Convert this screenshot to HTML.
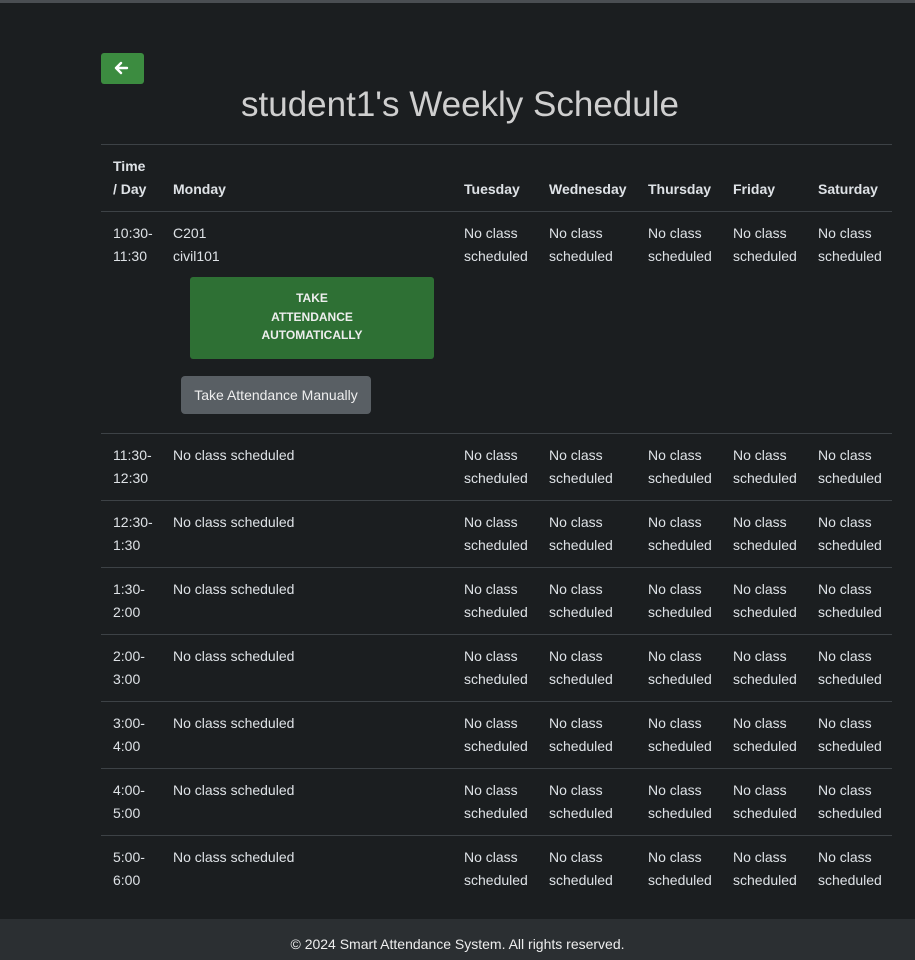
<!DOCTYPE html>
<html><head><meta charset="utf-8"><style>
*{box-sizing:border-box;margin:0;padding:0}
html,body{width:915px;height:960px;overflow:hidden}
body{background:#1b1e20;font-family:"Liberation Sans",Arial,sans-serif;color:#dee2e6;font-size:14px;line-height:23px;position:relative}
.topbar{position:absolute;top:0;left:0;width:915px;height:3px;background:#4a4e52}
.back{position:absolute;left:101px;top:53px;width:43px;height:31px;background:#3c8c40;border-radius:3px}
h1{position:absolute;left:0;width:920px;top:82px;text-align:center;font-weight:400;font-size:35px;line-height:46px;color:#cfcfcf}
table{position:absolute;left:101px;top:144px;width:791px;border-collapse:collapse;table-layout:fixed}
td,th{padding:10px 0 10px 12px;border-top:1px solid #3d4246;vertical-align:top;text-align:left;overflow:visible}
th{font-weight:700;vertical-align:bottom;padding-top:10px;padding-bottom:10px}
.auto{display:block;margin:9px 0 0 17px;width:244px;height:82px;background:#2e7034;border-radius:3px;color:#eee;font-weight:700;font-size:12px;line-height:18.5px;text-align:center;padding-top:12px}
.man{display:block;margin:17px 0 9px 8px;width:190px;height:38px;background:#595f64;border-radius:4px;color:#eee;text-align:center;line-height:38px}
footer{position:absolute;left:0;top:919px;width:915px;height:41px;background:#2b2f32;text-align:center;color:#eee;line-height:50px;font-size:14px}
</style></head><body>
<div class="topbar"></div>
<div class="back"><svg width="43" height="31" viewBox="0 0 43 31"><path d="M26 15H15M20 10l-5 5 5 5" stroke="#fff" stroke-width="2.4" fill="none" stroke-linecap="round" stroke-linejoin="round"/></svg></div>
<h1>student1's Weekly Schedule</h1>
<table>
<colgroup><col style="width:60px"><col style="width:291px"><col style="width:85px"><col style="width:99px"><col style="width:85px"><col style="width:85px"><col style="width:86px"></colgroup>
<tr><th>Time<br>/ Day</th><th>Monday</th><th>Tuesday</th><th>Wednesday</th><th>Thursday</th><th>Friday</th><th>Saturday</th></tr>
<tr><td>10:30-<br>11:30</td><td>C201<br>civil101<span class="auto">TAKE<br>ATTENDANCE<br>AUTOMATICALLY</span><span class="man">Take Attendance Manually</span></td><td>No class scheduled</td><td>No class scheduled</td><td>No class scheduled</td><td>No class scheduled</td><td>No class scheduled</td></tr>
<tr><td>11:30-<br>12:30</td><td>No class scheduled</td><td>No class scheduled</td><td>No class scheduled</td><td>No class scheduled</td><td>No class scheduled</td><td>No class scheduled</td></tr>
<tr><td>12:30-<br>1:30</td><td>No class scheduled</td><td>No class scheduled</td><td>No class scheduled</td><td>No class scheduled</td><td>No class scheduled</td><td>No class scheduled</td></tr>
<tr><td>1:30-<br>2:00</td><td>No class scheduled</td><td>No class scheduled</td><td>No class scheduled</td><td>No class scheduled</td><td>No class scheduled</td><td>No class scheduled</td></tr>
<tr><td>2:00-<br>3:00</td><td>No class scheduled</td><td>No class scheduled</td><td>No class scheduled</td><td>No class scheduled</td><td>No class scheduled</td><td>No class scheduled</td></tr>
<tr><td>3:00-<br>4:00</td><td>No class scheduled</td><td>No class scheduled</td><td>No class scheduled</td><td>No class scheduled</td><td>No class scheduled</td><td>No class scheduled</td></tr>
<tr><td>4:00-<br>5:00</td><td>No class scheduled</td><td>No class scheduled</td><td>No class scheduled</td><td>No class scheduled</td><td>No class scheduled</td><td>No class scheduled</td></tr>
<tr><td>5:00-<br>6:00</td><td>No class scheduled</td><td>No class scheduled</td><td>No class scheduled</td><td>No class scheduled</td><td>No class scheduled</td><td>No class scheduled</td></tr>
</table>
<footer>© 2024 Smart Attendance System. All rights reserved.</footer>
</body></html>
